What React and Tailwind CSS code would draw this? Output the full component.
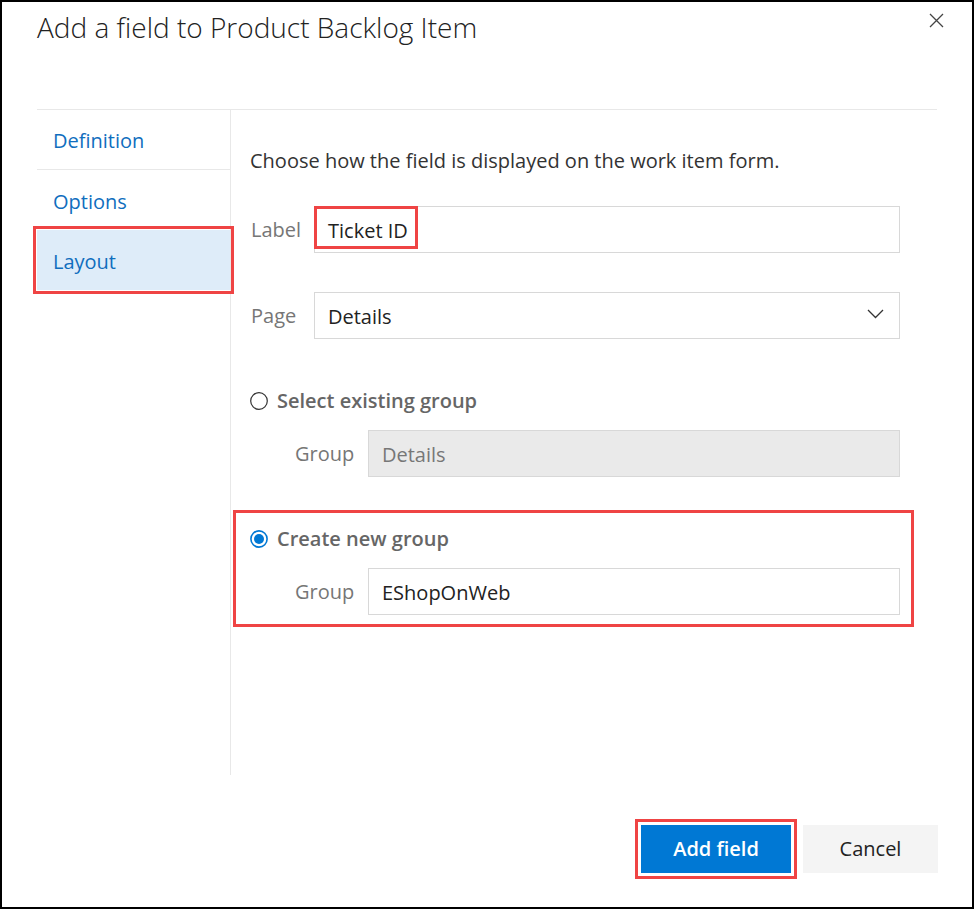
import React from 'react';

function Radio({ checked }) {
  if (checked) {
    return (
      <svg width="18" height="18" viewBox="0 0 18 18" className="shrink-0">
        <circle cx="9" cy="9" r="8.1" fill="white" stroke="#0078d4" strokeWidth="1.6" />
        <circle cx="9" cy="9" r="5" fill="#0078d4" />
      </svg>
    );
  }
  return (
    <svg width="18" height="18" viewBox="0 0 18 18" className="shrink-0">
      <circle cx="9" cy="9" r="8.3" fill="white" stroke="#333" strokeWidth="1.2" />
    </svg>
  );
}

const NAV = ['Definition', 'Options', 'Layout'];

export default function App() {
  return (
    <div className="w-[974px] h-[909px] border-2 border-black bg-white flex flex-col font-['Open_Sans',sans-serif] text-[#333]">
      {/* header */}
      <div className="h-[107px] shrink-0 flex items-start justify-between pl-[35px] pr-[28px] pt-[6px]">
        <h1 className="text-[28px] font-light leading-[38px] text-[#222]">Add a field to Product Backlog Item</h1>
        <button className="mt-[5px] text-[#444]">
          <svg width="15" height="15" viewBox="0 0 15 15">
            <path d="M1 1L14 14M14 1L1 14" stroke="#444" strokeWidth="1.3" fill="none" />
          </svg>
        </button>
      </div>

      {/* body */}
      <div className="mx-[35px] h-[666px] shrink-0 border-t border-[#e8e8e8] flex">
        <nav className="w-[194px] shrink-0 border-r border-[#e8e8e8]">
          {NAV.map((item, idx) => (
            <div
              key={item}
              className={
                item === 'Layout'
                  ? 'h-[60px] flex items-center pl-[16px] pt-[3px] text-[20px] text-[#106ebe] bg-[#deecf9] outline-[3px] outline-solid outline-[#ef4444] outline-offset-[1px]'
                  : idx === 0
                  ? 'h-[60px] flex items-center pl-[16px] pt-[3px] text-[20px] text-[#106ebe] border-b border-[#e8e8e8]'
                  : 'h-[60px] flex items-center pl-[16px] pt-[3px] text-[20px] text-[#106ebe]'
              }
            >
              {item}
            </div>
          ))}
        </nav>

        <div className="flex-1 pl-[19px] pr-[37px] pt-[38px] flex flex-col">
          <p className="text-[20px] leading-[26px] text-[#333]">Choose how the field is displayed on the work item form.</p>

          <div className="flex items-center mt-[32px]">
            <span className="w-[64px] shrink-0 pl-px text-[20px] text-[#767676]">Label</span>
            <div className="relative flex-1 h-[47px] border border-[#d8d8d8] flex items-center pl-[13px] pt-[3px] text-[20px] text-[#222]">
              Ticket ID
              <div className="absolute left-[-1px] top-[-1px] w-[104px] h-[43px] border-[3px] border-[#ef4444]" />
            </div>
          </div>

          <div className="flex items-center mt-[39px]">
            <span className="w-[64px] shrink-0 pl-px text-[20px] text-[#767676]">Page</span>
            <div className="flex-1 h-[47px] border border-[#d8d8d8] flex items-center justify-between pl-[13px] pr-[15px] pt-[3px] text-[20px] text-[#222]">
              <span>Details</span>
              <svg width="17" height="10" viewBox="0 0 17 10" className="-mt-[6px]">
                <path d="M1 1L8.5 8.5L16 1" stroke="#333" strokeWidth="1.3" fill="none" />
              </svg>
            </div>
          </div>

          <div className="flex items-center gap-[9px] mt-[49px] h-[26px]">
            <Radio />
            <span className="text-[20px] font-semibold text-[#666]">Select existing group</span>
          </div>
          <div className="flex items-center mt-[16px] pl-[45px]">
            <span className="w-[73px] shrink-0 text-[20px] text-[#767676]">Group</span>
            <div className="flex-1 h-[47px] border border-[#d8d8d8] bg-[#eaeaea] flex items-center pl-[13px] pt-[3px] text-[20px] text-[#777]">
              Details
            </div>
          </div>

          <div className="mt-[33px] -ml-[17px] -mr-[14px] border-[3px] border-[#ef4444] pl-[14px] pr-[11px] pt-[13px] pb-[9px]">
            <div className="flex items-center gap-[9px] h-[26px]">
              <Radio checked />
              <span className="text-[20px] font-semibold text-[#666]">Create new group</span>
            </div>
            <div className="flex items-center mt-[16px] pl-[45px]">
              <span className="w-[73px] shrink-0 text-[20px] text-[#767676]">Group</span>
              <div className="flex-1 h-[47px] border border-[#d8d8d8] bg-white flex items-center pl-[13px] pt-[3px] text-[20px] text-[#222]">
                EShopOnWeb
              </div>
            </div>
          </div>
        </div>
      </div>

      {/* footer */}
      <div className="flex justify-end gap-[12px] pr-[34px] mt-[50px]">
        <button className="w-[150px] h-[48px] bg-[#0078d4] text-white text-[20px] font-semibold outline-[3px] outline-solid outline-[#ef4444] outline-offset-[3px]">
          Add field
        </button>
        <button className="w-[135px] h-[48px] bg-[#f4f4f4] text-[#222] text-[20px]">
          Cancel
        </button>
      </div>
    </div>
  );
}
